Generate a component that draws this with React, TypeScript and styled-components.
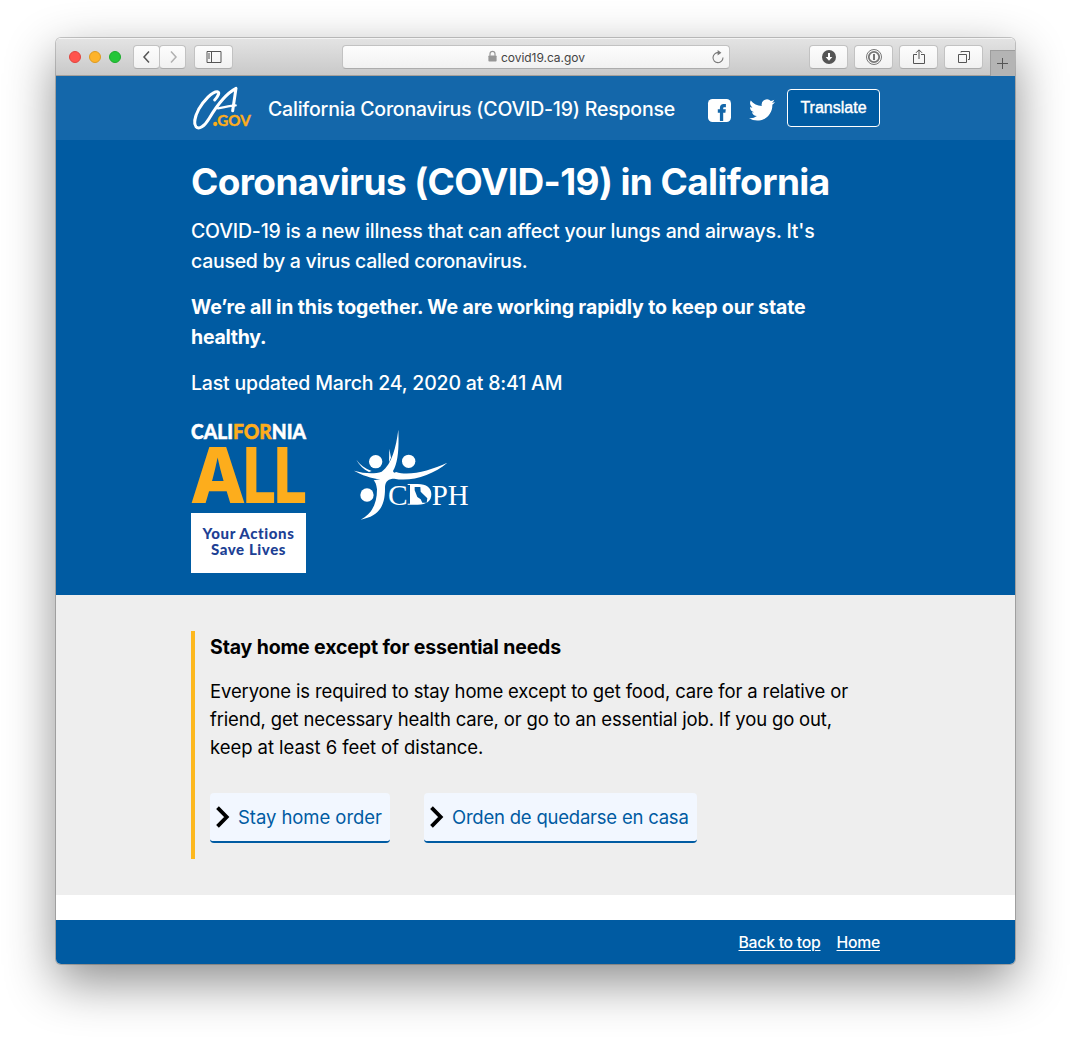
import React from "react";
import styled, { createGlobalStyle } from "styled-components";

const GlobalStyle = createGlobalStyle`
  *, *::before, *::after { box-sizing: border-box; }
  html, body { margin: 0; background: #fff; }
  body { font-family: Inter, "Open Sans", sans-serif; overflow: hidden; }
  h1, h2, p { margin: 0; }
  svg { display: block; overflow: visible; }
`;

const Desktop = styled.main`
  height: 1038px;
  padding: 38px 56px 74px;
`;

const BrowserWindow = styled.div`
  display: flex;
  flex-direction: column;
  height: 926px;
  border-radius: 5px;
  overflow: hidden;
  background: #fff;
  box-shadow: 0 18px 50px rgba(0, 0, 0, 0.45), 0 0 0 1px rgba(0, 0, 0, 0.2);
`;

const Toolbar = styled.div`
  display: flex;
  align-items: flex-start;
  flex: none;
  height: 38px;
  padding: 6px 0 0 13px;
  background: linear-gradient(#e3e3e3, #c9c9c9);
  border-top: 1px solid #f4f4f4;
  border-bottom: 1px solid #a5a09b;
`;

const Lights = styled.div`
  display: flex;
  gap: 8px;
  padding: 6px 0;
  margin-right: 12px;
`;

const Light = styled.span<{ $fill: string; $edge: string }>`
  width: 12px;
  height: 12px;
  border-radius: 50%;
  background: ${(p) => p.$fill};
  border: 1px solid ${(p) => p.$edge};
`;

const ToolButton = styled.button<{ $width: number; $gap?: number; $joined?: boolean }>`
  display: flex;
  align-items: center;
  justify-content: center;
  width: ${(p) => p.$width}px;
  height: 24px;
  padding: 0;
  margin-left: ${(p) => p.$gap ?? 0}px;
  border: 1px solid #c2c2c2;
  border-bottom-color: #acacac;
  border-radius: 4px;
  background: linear-gradient(#fdfdfd, #f1f1f1);
`;

const AddressBar = styled.div`
  display: flex;
  align-items: center;
  width: 388px;
  height: 24px;
  margin: 0 79px 0 109px;
  padding: 0 5px 0 145px;
  border: 1px solid #c2c2c2;
  border-bottom-color: #acacac;
  border-radius: 4px;
  background: linear-gradient(#fdfdfd, #f1f1f1);
  color: #444;
  font-size: 12px;
  letter-spacing: -0.05px;
`;

const Url = styled.span`
  flex: 1;
  margin-left: 4px;
`;

const NewTab = styled.div`
  display: flex;
  align-items: center;
  justify-content: center;
  width: 25px;
  height: 26px;
  margin: 5px 0 0 7px;
  padding-right: 1px;
  background: #b4b4b4;
  border: 1px solid #9d9d9d;
  border-right: 0;
  border-bottom: 0;
`;

const SiteHeader = styled.header`
  display: flex;
  flex: none;
  height: 64px;
  padding: 0 135px;
  background: #1467aa;
`;

const LogoBox = styled.div`
  width: 77px;
  padding-top: 9px;
`;

const SiteTitle = styled.div`
  width: 440px;
  padding-top: 18px;
  color: #fff;
  font-size: 19.5px;
  line-height: 30px;
  font-weight: 500;
  letter-spacing: -0.21px;
  white-space: nowrap;
`;

const FacebookBox = styled.div`
  width: 41px;
  padding-top: 23px;
`;

const TwitterBox = styled.div`
  width: 38px;
  padding-top: 21px;
`;

const Translate = styled.button`
  width: 93px;
  height: 38px;
  margin-top: 13px;
  padding: 0;
  color: #fff;
  background: #005ba2;
  border: 1px solid #fff;
  border-radius: 4px;
  font: 16px "Liberation Sans", sans-serif;
  -webkit-text-stroke: 0.4px #fff;
`;

const Hero = styled.section`
  flex: none;
  height: 455px;
  padding: 0 135px;
  background: #005ba2;
  color: #fff;
`;

const Title = styled.h1`
  padding-top: 18px;
  font-size: 37px;
  line-height: 48px;
  font-weight: 700;
  letter-spacing: -0.62px;
  white-space: nowrap;
`;

const Paragraph = styled.p<{ $top: number; $bold?: boolean }>`
  margin-top: ${(p) => p.$top}px;
  font-size: 19.5px;
  line-height: 30px;
  font-weight: ${(p) => (p.$bold ? 700 : 500)};
`;

const Line = styled.span<{ $track: number }>`
  display: block;
  white-space: nowrap;
  letter-spacing: ${(p) => p.$track}px;
`;

const Partners = styled.div`
  display: flex;
  gap: 46px;
  margin-top: 23px;
`;

const Campaign = styled.div`
  width: 116px;
`;

const DepartmentBox = styled.div`
  padding-top: 7px;
`;

const Slogan = styled.div`
  width: 115px;
  height: 60px;
  margin-top: 8px;
  padding-top: 12px;
  background: #fff;
  color: #203f94;
  font: 900 15px/16px Lato, sans-serif;
  text-align: center;
  letter-spacing: 0.6px;
`;

const Advice = styled.section`
  flex: none;
  height: 300px;
  padding: 36px 135px;
  background: #eee;
`;

const Callout = styled.div`
  height: 228px;
  padding: 1px 0 0 15px;
  border-left: 4px solid #fdb81e;
  color: #000;
`;

const CalloutTitle = styled.h2`
  font-size: 19.5px;
  line-height: 30px;
  font-weight: 700;
`;

const CalloutText = styled.p`
  margin-top: 15px;
  font-size: 18.5px;
  line-height: 28px;
`;

const Links = styled.div`
  display: flex;
  gap: 34px;
  margin-top: 32px;
`;

const ActionLink = styled.a<{ $width: number; $track: number }>`
  display: flex;
  align-items: center;
  gap: 7px;
  width: ${(p) => p.$width}px;
  height: 50px;
  padding: 0 0 0 6px;
  background: #f2f7ff;
  border-bottom: 2px solid #005ba2;
  border-radius: 4px;
  color: #005ba2;
  font-size: 18.5px;
  letter-spacing: ${(p) => p.$track}px;
  white-space: nowrap;
`;

const SiteFooter = styled.footer`
  display: flex;
  justify-content: flex-end;
  gap: 16px;
  flex: 1;
  margin-top: 25px;
  padding: 10px 135px 0;
  background: #005ba2;
`;

const FooterLink = styled.a`
  color: #fff;
  font-size: 15.75px;
  line-height: 25px;
  font-weight: 500;
  letter-spacing: -0.25px;
  text-decoration: underline;
  text-underline-offset: 2px;
`;

const ToolIcon = ({ kind }: { kind: string }) => (
  <svg width="18" height="18" viewBox="0 0 18 18" fill="none" stroke="#555" strokeWidth="1">
    {kind === "back" && <path d="M11 3.5 6 9l5 5.5" strokeWidth="1.5" />}
    {kind === "forward" && <path d="m7 3.5 5 5.5-5 5.5" stroke="#b0b0b0" strokeWidth="1.5" />}
    {kind === "sidebar" && <path d="M2 3.5h14v11H2zM6.5 3.5v11M3 6h2M3 8h2M3 10h2" />}
    {kind === "download" && (
      <>
        <circle cx="9" cy="9" r="7" fill="#555" stroke="none" />
        <path d="M9 5v5" stroke="#fff" strokeWidth="2" />
        <path d="M5.6 9h6.8L9 12.8z" fill="#fff" stroke="none" />
      </>
    )}
    {kind === "password" && (
      <>
        <circle cx="9" cy="9" r="7.5" stroke="#777" />
        <circle cx="9" cy="9" r="5.2" stroke="#777" strokeWidth="1.8" />
        <path d="M9 6v6" stroke="#666" strokeWidth="1.8" />
      </>
    )}
    {kind === "share" && <path d="M7 6.5H3.5v9h11v-9H11M9 11V2M6 4.8 9 1.8l3 3" />}
    {kind === "tabs" && <path d="M3.5 6.5h8v8h-8zM6 4.5v-1h8.5v8h-1.5" />}
  </svg>
);

const LockIcon = () => (
  <svg width="9" height="12" viewBox="0 0 9 12">
    <rect x=".4" y="4.5" width="8.2" height="6" rx=".8" fill="#969696" />
    <path d="M2 4.7V2.8a2.5 2.5 0 0 1 5 0v1.9" fill="none" stroke="#969696" strokeWidth="1.2" />
  </svg>
);

const ReloadIcon = () => (
  <svg width="12" height="14" viewBox="0 0 12 14">
    <path d="M6.5 2.7A5 5 0 1 0 11 7.6" fill="none" stroke="#777" strokeWidth="1.1" />
    <path d="M5.6 0v5.4L9.4 2.7z" fill="#777" />
  </svg>
);

const CaGovLogo = () => (
  <svg width="62" height="47" viewBox="30 15 186 141" fill="none">
    <path
      d="M101 60C109 52 119 36 109 35C94 34 68 62 53 88C43 107 37 130 45 140C54 150 70 139 84 116C106 79 132 42 165 25L155 92"
      stroke="#fff"
      strokeWidth="9"
      strokeLinejoin="round"
      strokeLinecap="round"
    />
    <path d="M111 85c15-2 35-8 53-9" stroke="#fff" strokeWidth="7" strokeLinecap="round" />
    <circle cx="103" cy="132" r="6.5" fill="#fdad1c" />
    <text
      x="109"
      y="137"
      textLength="100"
      lengthAdjust="spacingAndGlyphs"
      fontFamily="Lato"
      fontWeight="700"
      fontSize="46"
      fill="#fdad1c"
      stroke="#fdad1c"
      strokeWidth="1.2"
    >
      GOV
    </text>
  </svg>
);

const FacebookIcon = () => (
  <svg width="23" height="23" viewBox="0 0 23 23">
    <rect width="23" height="23" rx="4.5" fill="#fff" />
    <path d="M11.9 22v-8.3H9.8v-3.4h2.1V8.9c0-2.9 1.4-4 3.8-4h2.2v3.3h-1.4c-1 0-1.3.4-1.3 1.2v.9h2.6l-.4 3.4h-2.2V22z" fill="#1467aa" />
  </svg>
);

const TwitterIcon = () => (
  <svg width="26" height="26" viewBox="0 0 24 24" fill="#fff">
    <path d="M23.95 4.57a10 10 0 0 1-2.82.77 4.96 4.96 0 0 0 2.16-2.72c-.95.55-2 .96-3.12 1.18a4.92 4.92 0 0 0-8.38 4.48C7.69 8.1 4.07 6.13 1.64 3.16a4.82 4.82 0 0 0-.67 2.48c0 1.71.87 3.21 2.19 4.1a4.9 4.9 0 0 1-2.23-.62v.06a4.92 4.92 0 0 0 3.95 4.83 5 5 0 0 1-2.21.08 4.94 4.94 0 0 0 4.6 3.42A9.87 9.87 0 0 1 0 19.54a14 14 0 0 0 7.55 2.21c9.05 0 14-7.5 14-13.98 0-.21 0-.42-.02-.63a9.94 9.94 0 0 0 2.46-2.55z" />
  </svg>
);

const CaliforniaAllLogo = () => (
  <svg width="116" height="84" viewBox="0 0 116 84">
    <text
      x="0"
      y="17.5"
      fontFamily="Lato"
      fontWeight="900"
      fontSize="21"
      textLength="115"
      lengthAdjust="spacingAndGlyphs"
      fill="#fff"
      stroke="#fff"
      strokeWidth="0.5"
    >
      CALI<tspan fill="#fdad1c" stroke="#fdad1c">FOR</tspan>NIA
    </text>
    <text y="81.5" fontFamily="Inter" fontWeight="800" fontSize="77" fill="#fdad1c">
      <tspan x="-1" textLength="56" lengthAdjust="spacingAndGlyphs">A</tspan>
      <tspan x="52" textLength="33" lengthAdjust="spacingAndGlyphs">L</tspan>
      <tspan x="83" textLength="33" lengthAdjust="spacingAndGlyphs">L</tspan>
    </text>
  </svg>
);

const CdphLogo = () => (
  <svg width="118" height="94" viewBox="40 22 354 282" fill="#fff">
    <circle cx="108" cy="123" r="20" />
    <circle cx="207" cy="122" r="20" />
    <circle cx="82" cy="223" r="20" />
    <path d="M176 27C178 80 176 124 160 151C162 157 165 157 169 154C210 167 270 150 323 126C280 163 215 184 164 174C147 174 137 181 136 199C137 255 120 286 63 297C98 279 112 248 112 206C110 191 107 184 102 179L122 176C96 173 65 163 43 150C75 159 105 160 126 153C157 130 169 80 176 27Z" />
    <path d="M50 117C62 133 76 143 96 151L88 154C71 145 60 134 50 117ZM149 84L154 111L148 125Z" />
    <text x="145" y="252" fontFamily="Liberation Serif" fontSize="91" textLength="59" lengthAdjust="spacingAndGlyphs">
      C
    </text>
    <path d="M204 190h30c27 0 41 12 41 31 0 20-14 31-41 31h-30v-3h7v-56h-7z" />
    <path d="M225 199h17l1 14 20 20-2 13h-13l-5-10-10-7-8-20z" fill="#005ba2" />
    <text x="276" y="252" fontFamily="Liberation Serif" fontSize="91" textLength="111" lengthAdjust="spacingAndGlyphs">
      PH
    </text>
  </svg>
);

const Chevron = () => (
  <svg width="15" height="22" viewBox="0 0 15 22">
    <path d="m1.5 1.6 9.2 9.4-9.2 9.4" fill="none" stroke="#000" strokeWidth="3.8" />
  </svg>
);

export default function App() {
  return (
    <Desktop>
      <GlobalStyle />
      <BrowserWindow>
        <Toolbar>
          <Lights>
            <Light $fill="#ff544d" $edge="#e0443e" />
            <Light $fill="#fdb32a" $edge="#dd9a20" />
            <Light $fill="#25c63a" $edge="#1cab2c" />
          </Lights>
          <ToolButton $width={27}><ToolIcon kind="back" /></ToolButton>
          <ToolButton $width={27} $gap={-1}><ToolIcon kind="forward" /></ToolButton>
          <ToolButton $width={39} $gap={8}><ToolIcon kind="sidebar" /></ToolButton>
          <AddressBar>
            <LockIcon />
            <Url>covid19.ca.gov</Url>
            <ReloadIcon />
          </AddressBar>
          <ToolButton $width={39}><ToolIcon kind="download" /></ToolButton>
          <ToolButton $width={39} $gap={6}><ToolIcon kind="password" /></ToolButton>
          <ToolButton $width={39} $gap={6}><ToolIcon kind="share" /></ToolButton>
          <ToolButton $width={39} $gap={6}><ToolIcon kind="tabs" /></ToolButton>
          <NewTab>
            <svg width="11" height="11"><path d="M5.5 0v11M0 5.5h11" stroke="#555" /></svg>
          </NewTab>
        </Toolbar>
        <SiteHeader>
          <LogoBox><CaGovLogo /></LogoBox>
          <SiteTitle>California Coronavirus (COVID-19) Response</SiteTitle>
          <FacebookBox><FacebookIcon /></FacebookBox>
          <TwitterBox><TwitterIcon /></TwitterBox>
          <Translate>Translate</Translate>
        </SiteHeader>
        <Hero>
          <Title>Coronavirus (COVID-19) in California</Title>
          <Paragraph $top={10}>
            <Line $track={-0.19}>COVID-19 is a new illness that can affect your lungs and airways. It's</Line>
            <Line $track={-0.27}>caused by a virus called coronavirus.</Line>
          </Paragraph>
          <Paragraph $top={16} $bold>
            <Line $track={-0.11}>We’re all in this together. We are working rapidly to keep our state</Line>
            <Line $track={-0.25}>healthy.</Line>
          </Paragraph>
          <Paragraph $top={16}>
            <Line $track={-0.18}>Last updated March 24, 2020 at 8:41 AM</Line>
          </Paragraph>
          <Partners>
            <Campaign>
              <CaliforniaAllLogo />
              <Slogan>Your Actions<br />Save Lives</Slogan>
            </Campaign>
            <DepartmentBox><CdphLogo /></DepartmentBox>
          </Partners>
        </Hero>
        <Advice>
          <Callout>
            <CalloutTitle><Line $track={-0.14}>Stay home except for essential needs</Line></CalloutTitle>
            <CalloutText>
              <Line $track={-0.14}>Everyone is required to stay home except to get food, care for a relative or</Line>
              <Line $track={-0.17}>friend, get necessary health care, or go to an essential job. If you go out,</Line>
              <Line $track={-0.05}>keep at least 6 feet of distance.</Line>
            </CalloutText>
            <Links>
              <ActionLink $width={180} $track={-0.06}><Chevron />Stay home order</ActionLink>
              <ActionLink $width={273} $track={-0.22}><Chevron />Orden de quedarse en casa</ActionLink>
            </Links>
          </Callout>
        </Advice>
        <SiteFooter>
          <FooterLink>Back to top</FooterLink>
          <FooterLink>Home</FooterLink>
        </SiteFooter>
      </BrowserWindow>
    </Desktop>
  );
}
